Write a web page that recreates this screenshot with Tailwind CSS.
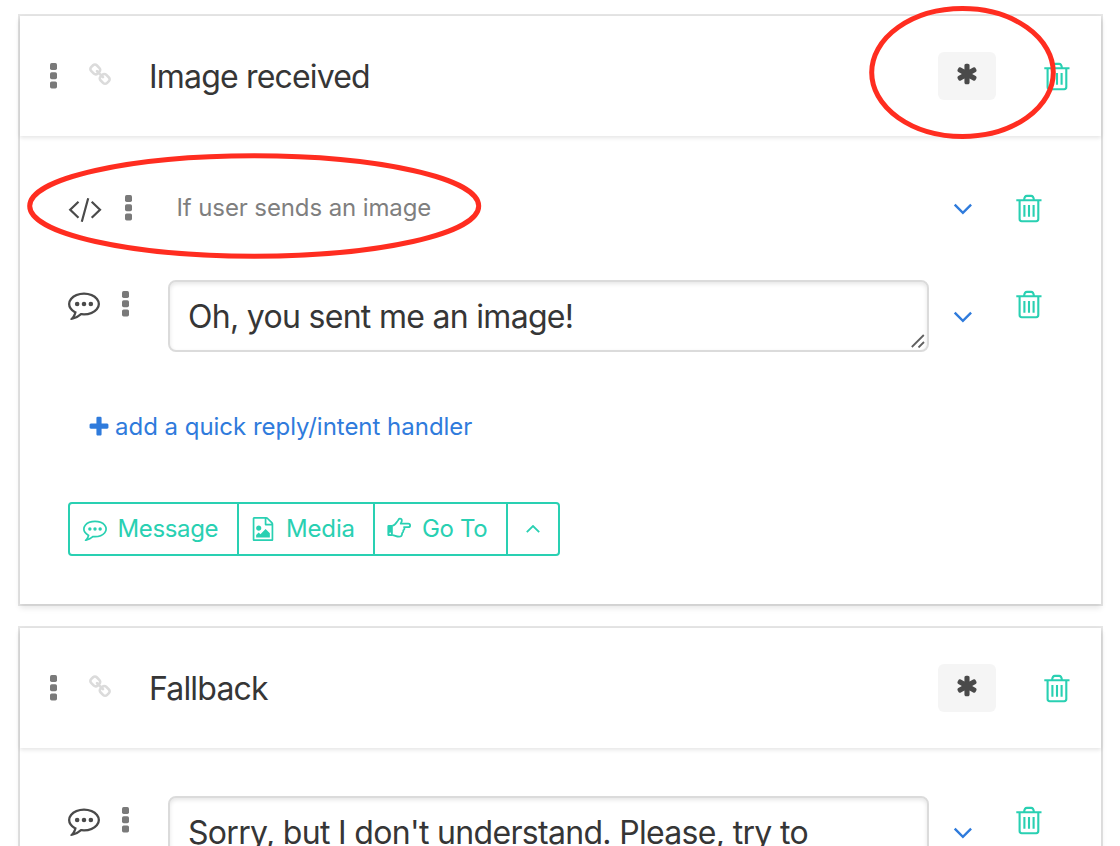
<!DOCTYPE html>
<html lang="en">
<head>
<meta charset="utf-8">
<title>Dialog blocks</title>
<script src="https://cdn.jsdelivr.net/npm/@tailwindcss/browser@4"></script>
</head>
<body class="bg-white">
<svg class="hidden">
  <symbol id="dots" viewBox="0 0 7 26"><rect width="7" height="7" rx="1.7"/><rect y="9.2" width="7" height="7" rx="1.7"/><rect y="18.4" width="7" height="7" rx="1.7"/></symbol>
  <symbol id="link" viewBox="0 0 1792 1792"><path d="M1520 1216q0-40-28-68l-208-208q-28-28-68-28-42 0-72 32 3 3 19 18.500t21.500 21.500 15 19 13 25.500 3.500 27.500q0 40-28 68t-68 28q-15 0-27.500-3.500t-25.500-13-19-15-21.500-21.500-18.500-19q-33 31-33 73 0 40 28 68l206 207q27 27 68 27 40 0 68-26l147-146q28-28 28-67zm-703-705q0-40-28-68l-206-207q-28-28-68-28-39 0-68 27l-147 146q-28 28-28 67 0 40 28 68l208 208q27 27 68 27 42 0 72-31-3-3-19-18.500t-21.500-21.500-15-19-13-25.500-3.500-27.500q0-40 28-68t68-28q15 0 27.500 3.500t25.500 13 19 15 21.500 21.500 18.500 19q33-31 33-73zm895 705q0 120-85 203l-147 146q-83 83-203 83-121 0-204-85l-206-207q-83-83-83-203 0-123 88-209l-88-88q-86 88-208 88-120 0-204-84l-208-208q-84-84-84-204t85-203l147-146q83-83 203-83 121 0 204 85l206 207q83 83 83 203 0 123-88 209l88 88q86-88 208-88 120 0 204 84l208 208q84 84 84 204z"/></symbol>
  <symbol id="asterisk" viewBox="0 0 1792 1792"><path d="M1546 1050q46 26 59.500 77.500t-12.500 97.500l-64 110q-26 46-77.500 59.500t-97.500-12.500l-266-153v307q0 52-38 90t-90 38h-128q-52 0-90-38t-38-90v-307l-266 153q-46 26-97.500 12.500t-77.500-59.500l-64-110q-26-46-12.500-97.500t59.500-77.500l266-154-266-154q-46-26-59.500-77.500t12.500-97.500l64-110q26-46 77.500-59.500t97.500 12.500l266 153v-307q0-52 38-90t90-38h128q52 0 90 38t38 90v307l266-153q46-26 97.500-12.500t77.500 59.500l64 110q26 46 12.500 97.500t-59.500 77.500l-266 154z"/></symbol>
  <symbol id="plus" viewBox="0 0 1792 1792"><path d="M1600 736v192q0 40-28 68t-68 28h-416v416q0 40-28 68t-68 28h-192q-40 0-68-28t-28-68v-416h-416q-40 0-68-28t-28-68v-192q0-40 28-68t68-28h416v-416q0-40 28-68t68-28h192q40 0 68 28t28 68v416h416q40 0 68 28t28 68z"/></symbol>
  <symbol id="bubble" viewBox="0 0 1792 1792"><circle cx="512" cy="896" r="128"/><circle cx="896" cy="896" r="128"/><circle cx="1280" cy="896" r="128"/><path d="M896 384q-204 0-381.500 69.500t-282 187.500-104.500 255q0 112 71.500 213.500t201.500 175.500l87 50-27 96q-24 91-70 172 152-63 275-171l43-38 57 6q69 8 130 8 204 0 381.500-69.500t282-187.500 104.500-255-104.500-255-282-187.500-381.500-69.500zm896 512q0 174-120 321.500t-326 233-450 85.500q-70 0-145-8-198 175-460 242-49 14-114 22h-5q-15 0-27-10.500t-16-27.500v-1q-3-4-.5-12t2-10 4.500-9.500l6-9 7-8.500 8-9q7-8 31-34.500t34.500-38 31-39.500 32.500-51 27-59 26-76q-157-89-247.500-220t-90.500-281q0-174 120-321.500t326-233 450-85.500 450 85.500 326 233 120 321.500z"/></symbol>
  <symbol id="picture" viewBox="0 0 1792 1792"><path d="M1596 380q28 28 48 76t20 88v1152q0 40-28 68t-68 28h-1344q-40 0-68-28t-28-68v-1600q0-40 28-68t68-28h896q40 0 88 20t76 48zm-444-244v376h376q-10-29-22-41l-313-313q-12-12-41-22zm384 1528v-1024h-416q-40 0-68-28t-28-68v-416h-768v1536h1280zm-128-448v320h-1024v-192l192-192 128 128 384-384zm-832-192q-80 0-136-56t-56-136 56-136 136-56 136 56 56 136-56 136-136 56z"/></symbol>
  <symbol id="hand" viewBox="0 0 24 24"><path fill-rule="evenodd" d="M.4 9.200q0-1.200 1.200-1.200h4.200v11H1.600Q.4 19 .4 17.800zM2.300 16.300a.9.900 0 1 0 1.800 0 .9.900 0 1 0-1.800 0z"/><path d="M5.400 8.700c2.800 0 4-3.200 5.600-5.200.8-1.100.6-1.900 1.900-1.900 1.500 0 2.100.9 1.900 2.200-.2 1.200-.8 1.900-1.100 2.900h7.600c1.100 0 1.800.8 1.800 1.700s-.8 1.700-1.800 1.700h-4.300c.8 1.300.4 2.600-.7 3.200.3 1.300-.1 2.300-1.200 3 .1 2.300-1 3.400-3 3.400-3 0-4.200-1.400-6.700-1.500" fill="none" stroke="currentColor" stroke-width="1.800" stroke-linejoin="round"/></symbol>
  <symbol id="trash" viewBox="0 0 26 29"><g fill="none" stroke="currentColor" stroke-width="2.100"><path d="M.3 6.300h25.200M8 6.300c.3-2.600 1-4.400 2.900-4.400h4.200c1.900 0 2.600 1.800 2.900 4.400M3.600 6.300v18.800q0 2.100 2.100 2.100h14.500q2.100 0 2.100-2.100V6.300M8.400 11v11.800M13 11v11.800M17.600 11v11.800"/></g></symbol>
  <symbol id="down" viewBox="0 0 20 12"><path d="M1.700 1.700l8.200 8.200 8.200-8.200" fill="none" stroke="currentColor" stroke-width="2.400"/></symbol>
  <symbol id="code" viewBox="0 0 34 26"><path d="M10.500 4.700l-8.300 8 8.300 8M23.700 4.700l8.300 8-8.300 8M20.200 1.200l-6.400 23.600" fill="none" stroke="currentColor" stroke-width="2.200"/></symbol>
</svg>

<div class="relative h-[846px] w-[1120px] overflow-hidden bg-white px-5 pt-4 font-[Inter,sans-serif] text-[#363636]">
  <section class="h-[588px] w-[1081px] bg-white shadow-[0_4px_6px_rgba(10,10,10,0.1),0_0_0_2px_rgba(10,10,10,0.1)]">
    <header class="flex h-[120px] items-start shadow-[0_2px_4px_rgba(10,10,10,0.1)]">
      <svg class="mt-[47px] ml-[30px] h-[26px] w-[7px] fill-[#7a7a7a]"><use href="#dots"/></svg>
      <svg class="mt-[47px] ml-[31px] size-6 fill-[#dbdbdb]"><use href="#link"/></svg>
      <h2 class="mt-[37px] ml-[37px] grow text-[32px] leading-[48px] tracking-[-0.820px] whitespace-nowrap">Image received</h2>
      <button class="mt-9 flex h-12 w-[58px] justify-center rounded-md bg-[#f5f5f5] pt-[10px] pr-px"><svg class="size-6 fill-[#4a4a4a]"><use href="#asterisk"/></svg></button>
      <svg class="mt-[46px] mr-[31px] ml-[48px] h-[29px] w-[26px] text-[#29d0b2]"><use href="#trash"/></svg>
    </header>
    <div class="mt-[32px] flex h-[96px] items-start">
      <svg class="mt-[29px] ml-[48px] h-[26px] w-[34px] text-[#4a4a4a]"><use href="#code"/></svg>
      <svg class="mt-[27px] ml-[23px] h-[26px] w-[7px] fill-[#7a7a7a]"><use href="#dots"/></svg>
      <p class="mt-[22px] ml-[44.500px] grow text-2xl leading-9 tracking-[-0.110px] text-[#7f7f7f]">If user sends an image</p>
      <svg class="mt-[35px] h-3 w-5 text-[#2f7bdc]"><use href="#down"/></svg>
      <svg class="mt-[26px] mr-[59px] ml-[43px] h-[29px] w-[26px] text-[#29d0b2]"><use href="#trash"/></svg>
    </div>
    <div class="flex h-[112px] items-start">
      <svg class="mt-[24px] ml-[48px] size-8 fill-[#4a4a4a]"><use href="#bubble"/></svg>
      <svg class="mt-[27px] ml-[22px] h-[26px] w-[7px] fill-[#7a7a7a]"><use href="#dots"/></svg>
      <div class="relative mt-4 ml-[39px] h-[72px] w-[761px] rounded-lg border-2 border-[#dbdbdb] px-[18px] pt-[11px] text-[32px] leading-[48px] tracking-[-0.700px] shadow-[inset_0_2px_4px_rgba(10,10,10,0.1)]">Oh, you sent me an image!
        <svg class="absolute right-[2px] bottom-[2px] size-[14px]" viewBox="0 0 14 14" fill="none" stroke="#606060" stroke-width="1.800"><path d="M.8 13L12.800 1M7.500 13.500l5.500-5.500"/></svg>
      </div>
      <svg class="mt-[47px] ml-[24px] h-3 w-5 text-[#2f7bdc]"><use href="#down"/></svg>
      <svg class="mt-[26px] ml-[43px] h-[29px] w-[26px] text-[#29d0b2]"><use href="#trash"/></svg>
    </div>
    <a class="mt-[33px] ml-[67px] flex h-9 items-center text-2xl text-[#2f7bdc]"><svg class="mb-px size-6 fill-current"><use href="#plus"/></svg><span class="ml-1 tracking-[-0.020px]">add a quick reply/intent handler</span></a>
    <div class="mt-[57px] ml-12 flex h-[54px] w-[492px] divide-x-2 divide-[#29d0b2] rounded border-2 border-[#29d0b2] text-2xl text-[#29d0b2]">
      <button class="flex w-[169px] items-center pl-[13px]"><svg class="size-6 shrink-0 fill-current"><use href="#bubble"/></svg><span class="ml-[10.500px] tracking-[-0.350px]">Message</span></button>
      <button class="flex w-[136px] items-center pl-[12px]"><svg class="mb-px size-6 shrink-0 fill-current"><use href="#picture"/></svg><span class="ml-[11px] tracking-[-0.150px]">Media</span></button>
      <button class="flex w-[133px] items-center pl-[12px]"><svg class="size-6 shrink-0 fill-current"><use href="#hand"/></svg><span class="ml-[11px] tracking-[-0.350px] whitespace-nowrap">Go To</span></button>
      <button class="flex grow items-center justify-center"><svg class="h-2 w-[14px]" viewBox="0 0 14 8" fill="none" stroke="currentColor" stroke-width="1.800"><path d="M.8 7.200L7 1l6.200 6.200"/></svg></button>
    </div>
  </section>

  <section class="mt-6 h-[588px] w-[1081px] bg-white shadow-[0_4px_6px_rgba(10,10,10,0.1),0_0_0_2px_rgba(10,10,10,0.1)]">
    <header class="flex h-[120px] items-start shadow-[0_2px_4px_rgba(10,10,10,0.1)]">
      <svg class="mt-[47px] ml-[30px] h-[26px] w-[7px] fill-[#7a7a7a]"><use href="#dots"/></svg>
      <svg class="mt-[47px] ml-[31px] size-6 fill-[#dbdbdb]"><use href="#link"/></svg>
      <h2 class="mt-[37px] ml-[37px] grow text-[32px] leading-[48px] tracking-[-0.820px] whitespace-nowrap">Fallback</h2>
      <button class="mt-9 flex h-12 w-[58px] justify-center rounded-md bg-[#f5f5f5] pt-[10px] pr-px"><svg class="size-6 fill-[#4a4a4a]"><use href="#asterisk"/></svg></button>
      <svg class="mt-[46px] mr-[31px] ml-[48px] h-[29px] w-[26px] text-[#29d0b2]"><use href="#trash"/></svg>
    </header>
    <div class="mt-8 flex h-[150px] items-start">
      <svg class="mt-[24px] ml-[48px] size-8 fill-[#4a4a4a]"><use href="#bubble"/></svg>
      <svg class="mt-[27px] ml-[22px] h-[26px] w-[7px] fill-[#7a7a7a]"><use href="#dots"/></svg>
      <div class="mt-4 ml-[39px] h-[120px] w-[761px] rounded-lg border-2 border-[#dbdbdb] px-[18px] pt-[11px] text-[32px] leading-[48px] tracking-[-0.680px] shadow-[inset_0_2px_4px_rgba(10,10,10,0.1)]">Sorry, but I don't understand. Please, try to</div>
      <svg class="mt-[47px] ml-[24px] h-3 w-5 text-[#2f7bdc]"><use href="#down"/></svg>
      <svg class="mt-[26px] ml-[43px] h-[29px] w-[26px] text-[#29d0b2]"><use href="#trash"/></svg>
    </div>
  </section>

  <svg class="absolute top-0 left-0 h-[270px] w-[1120px]" fill="none" stroke="#ff2d20" stroke-width="5"><ellipse cx="962.500" cy="72.500" rx="90.800" ry="64"/><ellipse cx="254.200" cy="206" rx="224.500" ry="50.200"/></svg>
</div>
</body>
</html>
